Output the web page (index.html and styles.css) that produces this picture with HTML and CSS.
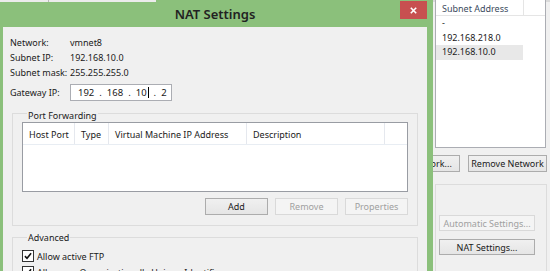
FILE: index.html
```html
<!DOCTYPE html>
<html lang="en">
<head>
  <meta charset="UTF-8" />
  <title>NAT Settings</title>
  <link rel="stylesheet" href="styles.css">
</head>
<body>
  <div class="desktop">

    <!-- window behind: Virtual Network Editor -->
    <div class="editor">
      <div class="side">
        <div class="net-list">
          <div class="net-head">
            <span class="net-col">Subnet Address</span>
            <span class="net-rest"></span>
          </div>
          <div class="net-row">-</div>
          <div class="net-row">192.168.218.0</div>
          <div class="net-row selected">192.168.10.0</div>
        </div>

        <div class="side-buttons">
          <button class="btn wide">Add Network...</button>
          <button class="btn wide">Remove Network</button>
        </div>

        <div class="side-group">
          <button class="btn long" disabled>Automatic Settings...</button>
          <button class="btn long">NAT Settings...</button>
        </div>
      </div>
    </div>

    <!-- NAT Settings dialog -->
    <div class="dialog" role="dialog" aria-label="NAT Settings">
      <div class="titlebar">
        <span></span>
        <span class="title">NAT Settings</span>
        <button class="close" aria-label="Close">
          <svg viewBox="0 0 10 10" aria-hidden="true">
            <path d="M2 2L8 8M8 2L2 8" />
          </svg>
        </button>
      </div>

      <div class="client">
        <div class="info">
          <span>Network:</span><span>vmnet8</span>
          <span>Subnet IP:</span><span>192.168.10.0</span>
          <span>Subnet mask:</span><span>255.255.255.0</span>
        </div>

        <div class="gateway">
          <label for="gw">Gateway IP:</label>
          <div class="ip-box" id="gw">
            <span class="oct">192</span><span class="dot">.</span>
            <span class="oct">168</span><span class="dot">.</span>
            <span class="oct">10<i class="caret"></i></span><span class="dot">.</span>
            <span class="oct">2</span>
          </div>
        </div>

        <div class="group port-group">
          <div class="group-title">Port Forwarding</div>
          <div class="listview">
            <div class="lv-head">
              <span class="c1">Host Port</span>
              <span class="c2">Type</span>
              <span class="c3">Virtual Machine IP Address</span>
              <span class="c4">Description</span>
              <span class="c5"></span>
            </div>
          </div>
          <div class="row-buttons">
            <button class="btn">Add</button>
            <button class="btn" disabled>Remove</button>
            <button class="btn" disabled>Properties</button>
          </div>
        </div>

        <div class="group adv-group">
          <div class="group-title">Advanced</div>
          <label class="check">
            <span class="box">
              <svg viewBox="0 0 12 12" aria-hidden="true"><path d="M2.3 6.2L4.8 8.8L9.7 2.8" /></svg>
            </span>
            Allow active FTP
          </label>
          <label class="check">
            <span class="box">
              <svg viewBox="0 0 12 12" aria-hidden="true"><path d="M2.3 6.2L4.8 8.8L9.7 2.8" /></svg>
            </span>
            Allow any Organizationally Unique Identifier
          </label>
        </div>
      </div>
    </div>

    <!-- sliver of another window above the dialog -->
    <div class="top-sliver"><span></span></div>

  </div>
</body>
</html>
```

FILE: styles.css
```css
*, *::before, *::after {
  box-sizing: border-box;
}
body {
  margin: 0;
  font-family: 'Noto Sans', 'Open Sans', sans-serif;
  font-size: 9px;
  color: #1a1a1a;
  background: #f0f0f0;
}

.desktop {
  position: relative;
  width: 550px;
  height: 271px;
  overflow: hidden;
  background: #f0f0f0;
}

button {
  font-family: inherit;
  font-size: inherit;
}

.top-sliver {
  position: absolute;
  left: 0;
  top: 0;
  width: 156px;
  height: 2px;
  background: #ececec;
  display: flex;
}
.top-sliver span {
  margin-left: 48px;
  width: 1px;
  background: #b9b9b9;
}


/* background window */
.editor {
  position: absolute;
  inset: 0;
  display: flex;
  justify-content: flex-end;
  border-top: 2px solid #dadada;
}
.side {
  width: 112px;
  margin-right: 3px;
  display: flex;
  flex-direction: column;
}

.net-list {
  margin-top: -7px;
  height: 153px;
  flex-shrink: 0;
  background: #fff;
  border: 1px solid #abadb3;
  border-top: none;
  margin-right: 1px;
}
.net-head {
  display: flex;
  height: 21px;
  border-bottom: 1px solid #e5e5e5;
  color: #3c4b5e;
}
.net-col {
  width: 88px;
  padding: 7px 0 0 6px;
  border-right: 1px solid #e5e5e5;
  white-space: nowrap;
}
.net-row {
  height: 14.5px;
  line-height: 14.5px;
  padding-left: 6px;
  width: 87px;
}
.net-row.selected {
  background: #e8e8e8;
}

.btn {
  height: 17px;
  padding: 0;
  border: 1px solid #acacac;
  background: linear-gradient(#f0f0f0, #e5e5e5);
  color: #1a1a1a;
  line-height: 15px;
  width: 63px;
  flex-shrink: 0;
  white-space: nowrap;
}
.btn:disabled {
  border-color: #d9d9d9;
  background: #f4f4f4;
  color: #a0a0a0;
}

.side-buttons {
  display: flex;
  justify-content: flex-end;
  gap: 8px;
  margin-top: 7px;
}
.btn.wide {
  width: 79px;
}

.side-group {
  margin-top: 12px;
  flex: 1;
  border: 1px solid #dcdcdc;
  border-bottom: none;
  padding: 30px 0 0 3px;
  display: flex;
  flex-direction: column;
  gap: 8px;
}
.btn.long {
  width: 96px;
  height: 16px;
}


/* dialog */
.dialog {
  position: absolute;
  left: -5px;
  top: 0;
  width: 438px;
  height: 290px;
  background: #8bc07b;
  padding: 0 6px 0 8px;
  display: flex;
  flex-direction: column;
}
.titlebar {
  height: 27px;
  flex-shrink: 0;
  display: grid;
  grid-template-columns: 1fr auto 1fr;
  align-items: start;
}
.title {
  font-size: 13px;
  font-weight: 600;
  color: #222;
  padding-top: 6px;
  line-height: 16px;
}
.close {
  justify-self: end;
  margin-top: 1px;
  width: 27px;
  height: 18px;
  border: none;
  padding: 0;
  background: #c75050;
  display: flex;
  align-items: center;
  justify-content: center;
}
.close svg {
  width: 9px;
  height: 9px;
  stroke: #fff;
  stroke-width: 1.8;
  fill: none;
}

.client {
  flex: 1;
  min-height: 0;
  overflow: hidden;
  background: #f0f0f0;
  padding: 8px 12px 0 7px;
}

.info {
  display: grid;
  grid-template-columns: 60px 1fr;
  line-height: 15px;
  white-space: nowrap;
}

.gateway {
  display: flex;
  align-items: center;
  margin-top: 4px;
}
.gateway label {
  width: 60px;
}
.ip-box {
  width: 102px;
  height: 17px;
  background: #fff;
  border: 1px solid #abadb3;
  display: flex;
  align-items: center;
  padding-left: 7px;
  gap: 5px;
  font-size: 9.5px;
}
.caret {
  display: inline-block;
  width: 1px;
  height: 11px;
  background: #000;
  vertical-align: -2px;
  margin-left: 1px;
}

.group {
  margin-left: 2px;
  width: 406px;
  border: 1px solid #dcdcdc;
}
.group-title {
  display: table;
  margin: -7px 0 0 5px;
  padding: 0 1px;
  line-height: 13px;
  background: #f0f0f0;
}

.port-group {
  margin-top: 12px;
  padding: 2px 9px 10px 9px;
}
.listview {
  height: 70px;
  background: #fff;
  border: 1px solid #999ca3;
}
.lv-head {
  display: flex;
  height: 22px;
  border-bottom: 1px solid #e8edf3;
  white-space: nowrap;
}
.lv-head span {
  padding: 5px 0 0 6px;
  border-right: 1px solid #e5e8ee;
}
.lv-head .c1 { width: 52px; }
.lv-head .c2 { width: 34px; }
.lv-head .c3 { width: 138px; }
.lv-head .c4 { width: 138px; }
.lv-head .c5 { border-right: none; }

.row-buttons {
  display: flex;
  justify-content: flex-end;
  gap: 7px;
  margin-top: 6px;
}

.adv-group {
  margin-top: 11px;
  height: 80px;
  padding: 0 9px;
}
.check {
  display: flex;
  align-items: center;
  gap: 3px;
  height: 12px;
  margin-top: 6px;
  white-space: nowrap;
}
.check + .check {
  margin-top: 4px;
}
.box {
  width: 12px;
  height: 12px;
  border: 1px solid #333;
  background: #fff;
  display: flex;
}
.box svg {
  width: 10px;
  height: 10px;
  stroke: #111;
  stroke-width: 1.9;
  fill: none;
}
```
